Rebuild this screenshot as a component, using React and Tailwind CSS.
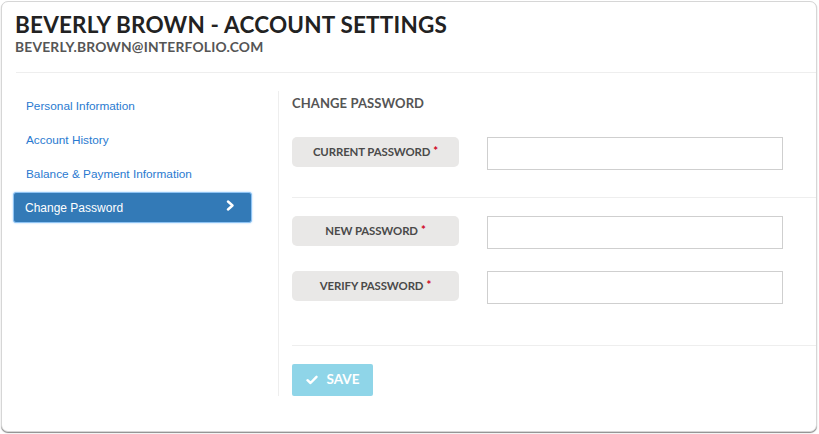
import React from 'react';

const navItems = [
  { label: 'Personal Information' },
  { label: 'Account History' },
  { label: 'Balance & Payment Information' },
  { label: 'Change Password', active: true },
];

function Chevron() {
  return (
    <svg width="9" height="11" viewBox="0 0 9 11" fill="none" className="-mt-[4px]">
      <path d="M2 1.5 L6.5 5.5 L2 9.5" stroke="white" strokeWidth="2.4" strokeLinecap="round" strokeLinejoin="round" />
    </svg>
  );
}

function Check() {
  return (
    <svg width="12" height="10" viewBox="0 0 12 10" fill="none">
      <path d="M1.5 5.2 L4.5 8 L10.5 1.8" stroke="white" strokeWidth="2.4" strokeLinecap="round" strokeLinejoin="round" />
    </svg>
  );
}

function FieldRow({ label }) {
  return (
    <div className="flex items-start">
      <div className="w-[167px] h-[30px] rounded-[5px] bg-[#e9e8e7] flex items-center justify-center text-[11.4px] font-bold text-[#4a4a4a] tracking-[-0.1px]">
        {label}
        <span className="text-[#d0021b] ml-[3px] -mt-[1px]">*</span>
      </div>
      <input type="password" className="ml-[28px] w-[296px] h-[33px] border border-[#cfcfcf] bg-white outline-none" />
    </div>
  );
}

export default function App() {
  return (
    <div className="w-[819px] h-[434px] bg-white p-[1px] pr-[2px] pb-[2px] font-['Lato',sans-serif]">
      <div className="h-full rounded-[7px] border border-[#d6d6d6] shadow-[0_1px_1px_#8a8a8a] bg-white flex flex-col">
        <div className="px-[13px] pt-[9px]">
          <h1 className="text-[22.5px] leading-[28px] font-bold text-[#222] tracking-[0.2px]">BEVERLY BROWN - ACCOUNT SETTINGS</h1>
          <div className="text-[13.8px] leading-[16px] font-bold text-[#555] tracking-[0.2px]">BEVERLY.BROWN@INTERFOLIO.COM</div>
        </div>
        <div className="ml-[14px] mt-[17px] border-t border-[#eeeeee]" />
        <div className="flex items-stretch mt-[19px]">
          <nav className="w-[276px] pl-[11px] pr-[26px] -mt-[2px] flex flex-col gap-[3px] font-['Liberation_Sans',sans-serif]">
            {navItems.map((item) =>
              item.active ? (
                <div
                  key={item.label}
                  className="h-[31px] rounded-[3px] bg-[#337ab7] border border-[#8ec3f3] shadow-[0_0_2px_#9fd0ff] flex items-center justify-between pl-[11px] pr-[16px] text-[12px] text-white"
                >
                  {item.label}
                  <Chevron />
                </div>
              ) : (
                <a key={item.label} className="h-[31px] pt-[3px] pl-[13px] flex items-center text-[11.8px] text-[#2a7ad0]">
                  {item.label}
                </a>
              )
            )}
          </nav>
          <div className="flex-1 border-l border-[#eeeeee] pl-[13px] -mt-[1px]">
            <h2 className="mt-[3px] text-[13px] font-bold text-[#555] tracking-[0.1px]">CHANGE PASSWORD</h2>
            <div className="mt-[23px]">
              <FieldRow label="CURRENT PASSWORD" />
            </div>
            <div className="mt-[27px] border-t border-[#eeeeee]" />
            <div className="mt-[18px] flex flex-col gap-[22px]">
              <FieldRow label="NEW PASSWORD" />
              <FieldRow label="VERIFY PASSWORD" />
            </div>
            <div className="mt-[41px] border-t border-[#eeeeee]" />
            <button className="mt-[18px] w-[81px] h-[32px] rounded-[2px] bg-[#8fd5e8] flex items-center justify-center gap-[9px] text-[13.5px] font-bold text-white">
              <Check />
              SAVE
            </button>
          </div>
        </div>
      </div>
    </div>
  );
}
